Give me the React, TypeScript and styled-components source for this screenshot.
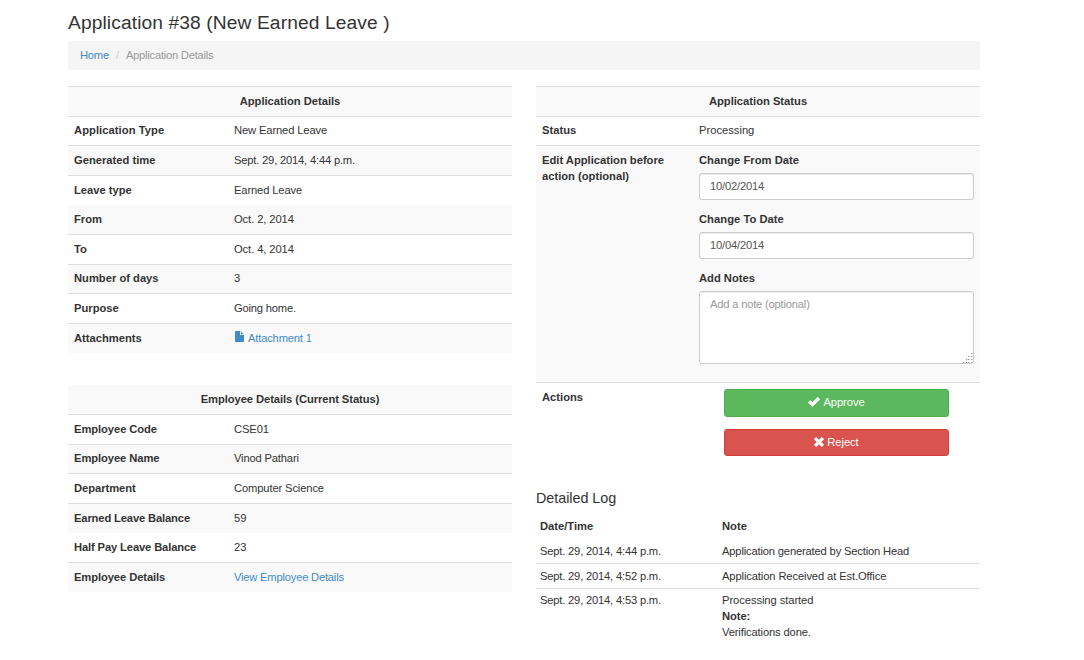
import React from "react";
import styled, { createGlobalStyle, css } from "styled-components";

const GlobalStyle = createGlobalStyle`
  * { box-sizing: border-box; }
  body {
    margin: 0;
    background: #fff;
    color: #333;
    font-family: "Liberation Sans", Arial, sans-serif;
    font-size: 11.2px;
    line-height: 16px;
  }
`;

const Page = styled.main`
  width: 912px;
  margin-left: 68px;
  padding-top: 12px;
`;

const Title = styled.h3`
  margin: 0 0 8px;
  height: 21px;
  font-size: 19.2px;
  font-weight: 400;
  line-height: 22px;
  letter-spacing: 0.11px;
  white-space: nowrap;
`;

const Breadcrumb = styled.nav`
  display: flex;
  height: 29px;
  padding: 6px 12px;
  margin-bottom: 16px;
  border-radius: 3px;
  background: #f5f5f5;
  color: #999;
  letter-spacing: -0.24px;
`;

const Separator = styled.span`
  width: 17px;
  text-align: center;
  color: #ccc;
`;

const Link = styled.a`
  color: #428bca;
  text-decoration: none;
`;

const Columns = styled.div`
  display: grid;
  grid-template-columns: 444px 444px;
  column-gap: 24px;
  align-items: start;
`;

const Panel = styled.section`
  margin-bottom: 32px;
`;

const Row = styled.div<{ $striped?: boolean; $line?: boolean; $short?: boolean; $labelWidth?: number; $height?: number }>`
  display: grid;
  grid-template-columns: ${p => p.$labelWidth ?? 160}px 1fr;
  height: ${p => p.$height ?? (p.$short ? 29 : 30)}px;
  padding: ${p => (p.$short ? 5 : 6)}px 6px 0;
  border-top: 1px solid ${p => (p.$line === false ? (p.$striped ? "#f9f9f9" : "#fff") : "#ddd")};
  background: ${p => (p.$striped ? "#f9f9f9" : "#fff")};
`;

const HeadRow = styled(Row)<{ $track?: number }>`
  display: block;
  text-align: center;
  font-weight: 700;
  letter-spacing: ${p => p.$track ?? 0}px;
`;

const Label = styled.div<{ $track?: number }>`
  font-weight: 700;
  letter-spacing: ${p => p.$track ?? 0}px;
`;

const Value = styled.div<{ $track?: number }>`
  min-width: 0;
  letter-spacing: ${p => p.$track ?? 0}px;
`;

const FileLink = styled(Link)`
  display: flex;
  gap: 4px;
  svg { margin: 1px 0 0 1px; }
`;

const Field = styled.label`
  display: block;
  height: 59px;
  font-weight: 700;
  letter-spacing: 0.04px;
`;

const control = css`
  display: block;
  width: 100%;
  border: 1px solid #ccc;
  border-radius: 3px;
  background: #fff;
  color: #555;
  box-shadow: inset 0 1px 1px rgba(0, 0, 0, 0.075);
  font: 400 11.2px/16px "Liberation Sans", Arial, sans-serif;
  letter-spacing: -0.2px;
  outline: none;
`;

const Input = styled.input`
  ${control}
  height: 27px;
  margin-top: 5px;
  padding: 3px 10px 5px;
`;

const NotesBox = styled.div`
  position: relative;
  margin-top: 5px;
`;

const Notes = styled.textarea`
  ${control}
  height: 73px;
  padding: 4px 10px;
  resize: none;
  &::placeholder { color: #999; opacity: 1; }
`;

const Grip = styled.svg`
  position: absolute;
  right: 1px;
  bottom: 1px;
`;

const Actions = styled.div`
  display: flex;
  flex-direction: column;
  gap: 12px;
  padding: 0 25px;
`;

const Button = styled.button<{ $bg: string; $edge: string; $height: number }>`
  display: flex;
  justify-content: center;
  align-items: center;
  gap: 3px;
  height: ${p => p.$height}px;
  padding: 0 0 2px;
  border: 1px solid ${p => p.$edge};
  border-radius: 3px;
  background: ${p => p.$bg};
  color: #fff;
  font: 400 11.2px/16px "Liberation Sans", Arial, sans-serif;
  letter-spacing: -0.06px;
`;

const LogTitle = styled.h4`
  margin: 0 0 10px;
  font-size: 14.4px;
  font-weight: 400;
  line-height: 16px;
  letter-spacing: -0.06px;
`;

const LogRow = styled.div<{ $line?: boolean; $height: number; $top?: number; $head?: boolean }>`
  display: grid;
  grid-template-columns: 182px 1fr;
  height: ${p => p.$height}px;
  padding: ${p => p.$top ?? 4}px 4px 0;
  border-top: ${p => (p.$line ? "1px solid #ddd" : "0")};
  font-weight: ${p => (p.$head ? 700 : 400)};
`;

const LogText = styled.span<{ $track: number }>`
  letter-spacing: ${p => p.$track}px;
`;

const FileIcon = () => (
  <svg width="9" height="11" viewBox="0 0 9 11" fill="#428bca">
    <path d="M.5 0H5v4h4v6.500q0 .5-.5.5H.5q-.5 0-.5-.5V.5Q0 0 .5 0z" />
    <path d="M5.800.3 8.700 3.300H5.800z" />
  </svg>
);

const CheckIcon = () => (
  <svg width="12" height="10" viewBox="0 0 12 10" fill="#fff">
    <path d="M.3 5.200 1.900 3.600q.4-.4.8 0L4.400 5.300 9.300.3q.4-.4.8 0l1.600 1.600q.4.4 0 .8L4.800 9.600q-.4.4-.8 0L.3 6q-.4-.4 0-.8z" />
  </svg>
);

const CrossIcon = () => (
  <svg width="10" height="10" viewBox="0 0 10 10" fill="#fff">
    <path d="M2.500.2 5 2.700 7.500.2q.3-.3.6 0L9.800 1.900q.3.3 0 .6L7.300 5l2.500 2.500q.3.3 0 .6L8.100 9.800q-.3.3-.6 0L5 7.300 2.500 9.800q-.3.3-.6 0L.2 8.100q-.3-.3 0-.6L2.700 5 .2 2.500q-.3-.3 0-.6L1.900.2q.3-.3.6 0z" />
  </svg>
);

const gripDots = [[8, 0], [5, 3], [8, 3], [3, 6], [5, 6], [8, 6], [0, 9], [3, 9], [5, 9], [8, 9]];

type Item = { label: string; value: React.ReactNode; short?: boolean; line?: boolean; track?: number; labelTrack?: number };

const application: Item[] = [
  { label: "Application Type", value: "New Earned Leave", short: true, track: -0.13, labelTrack: 0.06 },
  { label: "Generated time", value: "Sept. 29, 2014, 4:44 p.m.", track: -0.19 },
  { label: "Leave type", value: "Earned Leave", track: -0.13 },
  { label: "From", value: "Oct. 2, 2014", short: true, line: false, track: -0.09 },
  { label: "To", value: "Oct. 4, 2014", track: -0.09 },
  { label: "Number of days", value: "3", short: true },
  { label: "Purpose", value: "Going home.", track: -0.2 },
  { label: "Attachments", value: <FileLink><FileIcon />Attachment 1</FileLink>, track: -0.18 },
];

const employee: Item[] = [
  { label: "Employee Code", value: "CSE01", labelTrack: -0.07, track: -0.1 },
  { label: "Employee Name", value: "Vinod Pathari", short: true, labelTrack: -0.08, track: -0.17 },
  { label: "Department", value: "Computer Science", track: -0.13, labelTrack: -0.05 },
  { label: "Earned Leave Balance", value: "59", labelTrack: -0.14 },
  { label: "Half Pay Leave Balance", value: "23", short: true, line: false, labelTrack: -0.13 },
  { label: "Employee Details", value: <Link>View Employee Details</Link>, labelTrack: -0.09, track: -0.21 },
];

const Rows = ({ items }: { items: Item[] }) => (
  <>
    {items.map((it, i) => (
      <Row key={it.label} $striped={i % 2 === 1} $short={it.short} $line={it.line}>
        <Label $track={it.labelTrack}>{it.label}</Label>
        <Value $track={it.track}>{it.value}</Value>
      </Row>
    ))}
  </>
);

export default function App() {
  return (
    <>
      <GlobalStyle />
      <Page>
        <Title>Application #38 (New Earned Leave )</Title>
        <Breadcrumb>
          <Link>Home</Link>
          <Separator>/</Separator>
          <span>Application Details</span>
        </Breadcrumb>
        <Columns>
          <div>
            <Panel>
              <HeadRow $striped>Application Details</HeadRow>
              <Rows items={application} />
            </Panel>
            <Panel>
              <HeadRow $striped $short $line={false} $track={-0.07}>Employee Details (Current Status)</HeadRow>
              <Rows items={employee} />
            </Panel>
          </div>
          <div>
            <HeadRow $striped>Application Status</HeadRow>
            <Row $labelWidth={157} $short>
              <Label>Status</Label>
              <Value>Processing</Value>
            </Row>
            <Row $labelWidth={157} $striped $height={237}>
              <Label>Edit Application before<br />action (optional)</Label>
              <Value>
                <Field>Change From Date<Input defaultValue="10/02/2014" /></Field>
                <Field>Change To Date<Input defaultValue="10/04/2014" /></Field>
                <Label>Add Notes</Label>
                <NotesBox>
                  <Notes placeholder="Add a note (optional)" />
                  <Grip width="10" height="10" fill="#999">
                    {gripDots.map(([x, y]) => <rect key={`${x}-${y}`} x={x} y={y} width="1.400" height="1" />)}
                  </Grip>
                </NotesBox>
              </Value>
            </Row>
            <Row $labelWidth={157} $height={108}>
              <Label>Actions</Label>
              <Actions>
                <Button $bg="#5cb85c" $edge="#4cae4c" $height={28}><CheckIcon />Approve</Button>
                <Button $bg="#d9534f" $edge="#d43f3a" $height={27}><CrossIcon />Reject</Button>
              </Actions>
            </Row>
            <LogTitle>Detailed Log</LogTitle>
            <LogRow $height={26} $top={2} $head><span>Date/Time</span><span>Note</span></LogRow>
            <LogRow $height={21} $top={1}>
              <LogText $track={-0.19}>Sept. 29, 2014, 4:44 p.m.</LogText>
              <LogText $track={-0.17}>Application generated by Section Head</LogText>
            </LogRow>
            <LogRow $height={25} $line>
              <LogText $track={-0.19}>Sept. 29, 2014, 4:52 p.m.</LogText>
              <LogText $track={-0.12}>Application Received at Est.Office</LogText>
            </LogRow>
            <LogRow $height={56} $top={3} $line>
              <LogText $track={-0.19}>Sept. 29, 2014, 4:53 p.m.</LogText>
              <LogText $track={-0.07}>
                Processing started<br /><b>Note:</b><br />
                <LogText $track={-0.14}>Verifications done.</LogText>
              </LogText>
            </LogRow>
          </div>
        </Columns>
      </Page>
    </>
  );
}
